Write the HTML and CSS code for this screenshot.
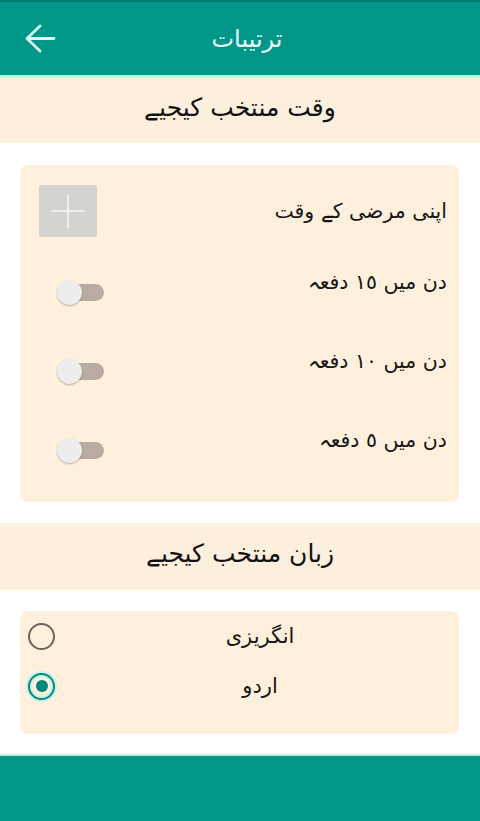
FILE: index.html
```html
<!DOCTYPE html>
<html lang="ur">
<head>
<meta charset="utf-8">
<title>ترتیبات</title>
<link rel="stylesheet" href="styles.css">
</head>
<body>
<div class="screen">
  <header class="appbar">
    <button class="back" aria-label="back">
      <svg width="32" height="32" viewBox="0 0 32 32"><path d="M30 15.5H3.5 M16 3L3 15.5L16 28" fill="none" stroke="#d9fbf3" stroke-width="2.8" stroke-linecap="round" stroke-linejoin="round"/></svg>
    </button>
    <h1 class="title">ترتیبات</h1>
  </header>

  <div class="section-title" dir="rtl">وقت منتخب کیجیے</div>

  <div class="card times" dir="rtl">
    <div class="row custom">
      <span class="label">اپنی مرضی کے وقت</span>
      <button class="add" aria-label="add">
        <svg width="58" height="52" viewBox="0 0 58 52"><path d="M29 9V43 M12 26H46" stroke="#f6f6f4" stroke-width="1.6"/></svg>
      </button>
    </div>
    <div class="row toggle">
      <span class="label">دن میں ١٥ دفعہ</span>
      <span class="switch"><span class="thumb"></span></span>
    </div>
    <div class="row toggle">
      <span class="label">دن میں ١٠ دفعہ</span>
      <span class="switch"><span class="thumb"></span></span>
    </div>
    <div class="row toggle">
      <span class="label">دن میں ٥ دفعہ</span>
      <span class="switch"><span class="thumb"></span></span>
    </div>
  </div>

  <div class="section-title second" dir="rtl">زبان منتخب کیجیے</div>

  <div class="card langs">
    <div class="radio-row">
      <span class="radio"></span>
      <span class="radio-label" dir="rtl">انگریزی</span>
    </div>
    <div class="radio-row">
      <span class="radio checked"></span>
      <span class="radio-label" dir="rtl">اردو</span>
    </div>
  </div>

  <footer class="bottombar"></footer>
</div>
</body>
</html>
```

FILE: styles.css
```css
* { box-sizing: border-box; }

html, body {
  margin: 0;
  padding: 0;
  background: #ffffff;
}

body {
  font-family: "DejaVu Sans", "Noto Sans", sans-serif;
  color: #161616;
}

.screen {
  width: 480px;
  height: 821px;
  display: flex;
  flex-direction: column;
  overflow: hidden;
}

.appbar {
  height: 77px;
  flex: none;
  display: flex;
  align-items: center;
  background: #009688;
  border-top: 2px solid #00796c;
  border-bottom: 2px solid #c4ece3;
}

.back {
  width: 60px;
  height: 56px;
  padding: 0 0 0 24px;
  margin: 0;
  border: none;
  background: transparent;
  display: flex;
  align-items: center;
}

.title {
  flex: 1;
  margin: 0;
  padding-right: 46px;
  text-align: center;
  font-size: 24px;
  font-weight: normal;
  color: #e9fffa;
  line-height: 1;
}

.section-title {
  flex: none;
  height: 66px;
  line-height: 62px;
  text-align: center;
  font-size: 25px;
  background: #fdefdd;
  color: #111111;
}

.section-title.second {
  margin-top: 21px;
  height: 67px;
}

.card {
  flex: none;
  margin: 22px 21px 0 20px;
  background: #fef0dd;
  border-radius: 8px;
}

.times {
  padding: 20px 12px 19px 19px;
}

.row {
  display: flex;
  justify-content: space-between;
}

.label {
  font-size: 20.5px;
  line-height: 30px;
  white-space: nowrap;
}

.custom {
  height: 52px;
  align-items: center;
}

.add {
  width: 58px;
  height: 52px;
  padding: 0;
  margin: 0;
  border: none;
  border-radius: 2px;
  background: #d3d3cf;
  display: block;
}

.add svg { display: block; }

.toggle {
  height: 58px;
  align-items: flex-start;
  margin-top: 21px;
}

.toggle:nth-child(2) { margin-top: 30px; }

.switch {
  position: relative;
  width: 47px;
  height: 25px;
  margin-top: 13px;
  margin-left: 18px;
  direction: ltr;
}

.switch::before {
  content: "";
  position: absolute;
  left: 5px;
  right: 0;
  top: 4px;
  height: 17px;
  border-radius: 8.5px;
  background: #b7ac9f;
}

.thumb {
  position: absolute;
  left: 0;
  top: 0;
  width: 25px;
  height: 25px;
  border-radius: 50%;
  background: #ededed;
  box-shadow: 0 1px 2px rgba(0, 0, 0, 0.28);
}

.langs {
  margin-top: 21px;
  padding: 0 0 23px 8px;
}

.radio-row {
  height: 50px;
  display: flex;
  align-items: center;
}

.radio {
  width: 27px;
  height: 27px;
  flex: none;
  border-radius: 50%;
  border: 2.5px solid #6c635a;
  position: relative;
}

.radio.checked {
  border-color: #00897b;
  box-shadow: 0 0 0 2px #c3f3ea, inset 0 0 0 2px #c3f3ea;
}

.radio.checked::after {
  content: "";
  position: absolute;
  left: 50%;
  top: 50%;
  width: 12px;
  height: 12px;
  margin: -6px 0 0 -6px;
  border-radius: 50%;
  background: #00897b;
}

.radio-label {
  flex: 1;
  text-align: center;
  font-size: 21px;
  line-height: 30px;
  padding-left: 6px;
}

.bottombar {
  margin-top: auto;
  height: 67px;
  flex: none;
  background: #009688;
  border-top: 2px solid #c4ece3;
}
```
